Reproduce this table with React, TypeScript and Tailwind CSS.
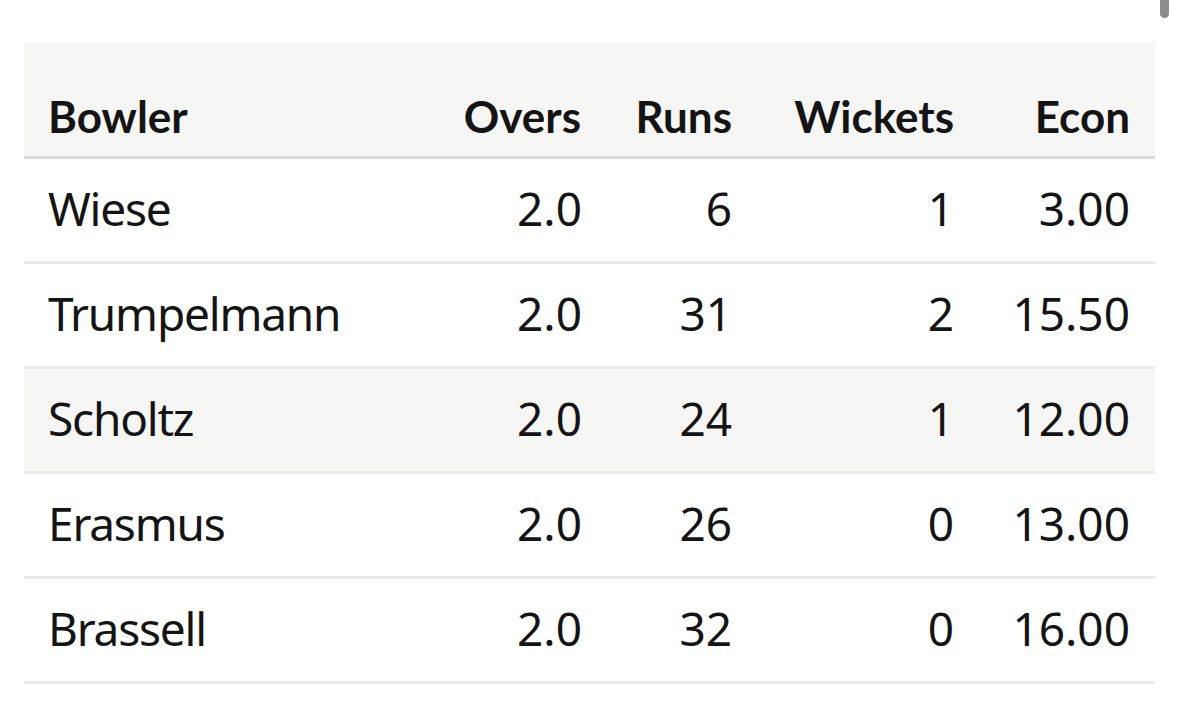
import React from 'react';

interface BowlerRow {
  name: string;
  overs: string;
  runs: string;
  wickets: string;
  econ: string;
}

const rows: BowlerRow[] = [
  { name: 'Wiese', overs: '2.0', runs: '6', wickets: '1', econ: '3.00' },
  { name: 'Trumpelmann', overs: '2.0', runs: '31', wickets: '2', econ: '15.50' },
  { name: 'Scholtz', overs: '2.0', runs: '24', wickets: '1', econ: '12.00' },
  { name: 'Erasmus', overs: '2.0', runs: '26', wickets: '0', econ: '13.00' },
  { name: 'Brassell', overs: '2.0', runs: '32', wickets: '0', econ: '16.00' },
];

const cols = 'grid grid-cols-[422px_160px_151px_222px_176px]';

const App: React.FC = () => {
  return (
    <div className="relative min-h-[717px] bg-white text-[#141414] font-['Noto_Sans',sans-serif]">
      {/* scroll thumb */}
      <div className="absolute right-[10px] top-0 h-[18px] w-[9px] rounded-b-full bg-[#8c8c8c]" />

      <div className="pt-[42px] pl-[24px]">
        <div className="w-[1131px]">
          {/* Header */}
          <div className={`${cols} h-[117px] items-end bg-[#f6f6f5] border-b-[3px] border-[#d8d8d8] font-['Lato',sans-serif] text-[44px] font-bold leading-none`}>
            <div className="pl-[24px] pb-[18px]">Bowler</div>
            <div className="pr-[25px] pb-[18px] text-right">Overs</div>
            <div className="pr-[25px] pb-[18px] text-right">Runs</div>
            <div className="pr-[25px] pb-[18px] text-right">Wickets</div>
            <div className="pr-[25px] pb-[18px] text-right">Econ</div>
          </div>

          {/* Body */}
          {rows.map((r, i) => (
            <div
              key={r.name}
              className={`${cols} h-[105px] items-center pb-[4px] border-b-[3px] border-[#ebebeb] text-[46px] leading-none ${
                i === 2 ? 'bg-[#f6f6f5]' : 'bg-white'
              }`}
            >
              <div className="pl-[24px] tracking-[-1.2px]">{r.name}</div>
              <div className="pr-[24px] text-right">{r.overs}</div>
              <div className="pr-[25px] text-right">{r.runs}</div>
              <div className="pr-[25px] text-right">{r.wickets}</div>
              <div className="pr-[25px] text-right">{r.econ}</div>
            </div>
          ))}
        </div>
      </div>
    </div>
  );
};

export default App;
